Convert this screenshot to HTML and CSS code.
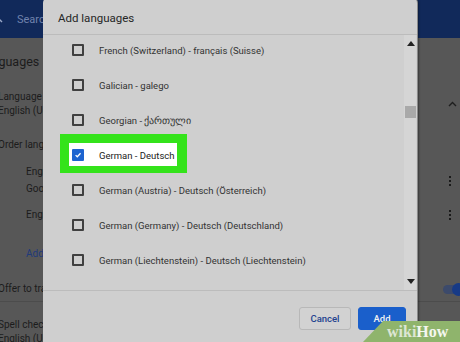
FILE: index.html
```html
<!DOCTYPE html>
<html>
<head>
<meta charset="utf-8">
<link rel="stylesheet" href="styles.css">
</head>
<body>
<div class="page">
  <div class="topbar">
    <svg class="search-ico" width="8" height="10" viewBox="0 0 8 10"><path d="M-2 4 L2 8" stroke="#9aa8c8" stroke-width="1.5" fill="none"/></svg>
    <span class="search">Search</span>
  </div>
  <div class="settings">
    <div class="s-title">Languages</div>
    <div class="s-row r-lang">
      <div class="s-left">
        <div class="s-line">Language</div>
        <div class="s-line">English (United States)</div>
      </div>
      <svg class="chev" width="9" height="6" viewBox="0 0 9 6"><path d="M1 5 L4.5 1.5 L8 5" stroke="#1e1e1e" stroke-width="1.4" fill="none"/></svg>
    </div>
    <div class="s-row r-order">
      <div class="s-left"><div class="s-line">Order languages based on your preference</div></div>
    </div>
    <div class="s-row r-eng1 indent">
      <div class="s-left">
        <div class="s-line">English (United States)</div>
        <div class="s-line g-line">Google Chrome</div>
      </div>
      <span class="dots"><i></i><i></i><i></i></span>
    </div>
    <div class="s-row r-eng2 indent">
      <div class="s-left"><div class="s-line">English</div></div>
      <span class="dots"><i></i><i></i><i></i></span>
    </div>
    <div class="s-row r-add indent">
      <div class="s-left"><div class="s-line link">Add languages</div></div>
    </div>
    <div class="s-row r-offer">
      <div class="s-left"><div class="s-line">Offer to translate pages</div></div>
      <span class="toggle"><span class="knob"></span></span>
    </div>
    <div class="s-sep"></div>
    <div class="s-row r-spell">
      <div class="s-left">
        <div class="s-line">Spell check</div>
        <div class="s-line">English (United States)</div>
      </div>
    </div>
  </div>

  <div class="dialog">
    <div class="d-head">Add languages</div>
    <div class="d-list">
      <div class="d-item"><span class="cb"></span><span class="lbl">French (Switzerland) - français (Suisse)</span></div>
      <div class="d-item"><span class="cb"></span><span class="lbl">Galician - galego</span></div>
      <div class="d-item"><span class="cb"></span><span class="lbl">Georgian - ქართული</span></div>
      <div class="d-item hl">
        <span class="hl-box"></span>
        <span class="cb checked"><svg width="10" height="10" viewBox="0 0 10 10"><path d="M2 5.2 L4.1 7.2 L8.2 2.8" stroke="#fff" stroke-width="1.6" fill="none"/></svg></span>
        <span class="lbl strong">German - Deutsch</span>
      </div>
      <div class="d-item"><span class="cb"></span><span class="lbl">German (Austria) - Deutsch (Österreich)</span></div>
      <div class="d-item"><span class="cb"></span><span class="lbl">German (Germany) - Deutsch (Deutschland)</span></div>
      <div class="d-item"><span class="cb"></span><span class="lbl">German (Liechtenstein) - Deutsch (Liechtenstein)</span></div>
      <div class="scrollbar">
        <svg class="arr up" width="8" height="5" viewBox="0 0 8 5"><path d="M0 5 L4 0 L8 5Z" fill="#222"/></svg>
        <span class="thumb"></span>
        <svg class="arr down" width="8" height="5" viewBox="0 0 8 5"><path d="M0 0 L4 5 L8 0Z" fill="#222"/></svg>
      </div>
    </div>
    <div class="d-foot">
      <button class="btn cancel">Cancel</button>
      <button class="btn add">Add</button>
    </div>
  </div>

  <div class="wikihow"><span class="wk">wiki</span><span class="hw">How</span></div>
</div>
</body>
</html>
```

FILE: styles.css
```css
* { box-sizing: border-box; }
html, body { margin: 0; padding: 0; }
body {
  width: 460px;
  height: 342px;
  overflow: hidden;
  background: #575757;
  font-family: Roboto, "Liberation Sans", sans-serif;
}
.page {
  position: relative;
  width: 460px;
  height: 342px;
  overflow: hidden;
}
.topbar {
  height: 38px;
  background: #11295a;
  display: flex;
  align-items: center;
  gap: 9px;
}
.search {
  color: #7083ad;
  font-size: 11px;
}
.settings {
  display: flex;
  flex-direction: column;
  color: #1c1c1c;
  font-size: 10px;
}
.s-title {
  font-size: 12.5px;
  line-height: 16px;
  margin-top: 16px;
  margin-left: -22px;
  width: 65px;
  overflow: hidden;
  white-space: nowrap;
}
.s-line {
  line-height: 14px;
  white-space: nowrap;
}
.s-row {
  display: flex;
  align-items: center;
  justify-content: space-between;
  padding-right: 3px;
}
.s-left {
  margin-left: -2px;
  width: 46px;
  overflow: hidden;
}
.indent .s-left { margin-left: 26px; width: 18px; }
.r-lang { margin-top: 20px; }
.r-order { margin-top: 20px; }
.r-eng1 { margin-top: 13px; }
.g-line { margin-top: 3px; }
.r-eng2 { margin-top: 12px; }
.r-add { margin-top: 25px; }
.link { color: #1f3a7a; }
.r-offer { margin-top: 21px; padding-right: 0; }
.s-sep { height: 1px; background: #4c4c4c; margin-top: 5px; }
.r-spell { margin-top: 16px; }
.dots {
  display: flex;
  flex-direction: column;
  gap: 2px;
  margin-right: 6px;
}
.dots i {
  display: block;
  width: 2px;
  height: 2px;
  background: #1a1a1a;
}
.toggle {
  position: relative;
  width: 22px;
  height: 9px;
  border-radius: 5px;
  background: #3c4a6b;
  margin-right: -5px;
}
.knob {
  position: absolute;
  right: 0;
  top: -2px;
  width: 13px;
  height: 13px;
  border-radius: 50%;
  background: #173a86;
}

/* dialog */
.dialog {
  position: absolute;
  left: 43px;
  top: -3px;
  width: 374px;
  height: 370px;
  background: #cfcfcf;
  border-radius: 6px;
  box-shadow: 1px 0 0 #8a8a8a, 2px 0 2px rgba(0,0,0,0.35);
  color: #2e2e2e;
}
.d-head {
  height: 38px;
  padding: 5px 0 0 15px;
  display: flex;
  align-items: center;
  font-size: 11.5px;
  color: #262626;
  border-bottom: 1px solid #bcbcbc;
}
.d-list {
  position: relative;
  height: 255px;
  overflow: hidden;
}
.d-item {
  position: relative;
  height: 35px;
  padding: 0 0 5px 29px;
  display: flex;
  align-items: center;
  gap: 15px;
}
.cb {
  position: relative;
  width: 12px;
  height: 12px;
  border: 2px solid #404040;
  border-radius: 1px;
  flex: none;
  display: flex;
  align-items: center;
  justify-content: center;
}
.cb.checked {
  background: #1d64d0;
  border-color: #1d64d0;
}
.lbl {
  position: relative;
  font-size: 9.5px;
  color: #333;
  white-space: nowrap;
}
.lbl.strong { color: #222; }
.hl-box {
  position: absolute;
  left: 17px;
  top: -6px;
  width: 127px;
  height: 39px;
  background: #fff;
  border-style: solid;
  border-color: #34e31b;
  border-width: 9px 10px 7px 9px;
}
.scrollbar {
  position: absolute;
  right: 1px;
  top: 0;
  width: 12px;
  height: 255px;
  background: #d5d5d5;
}
.arr { position: absolute; left: 3px; }
.arr.up { top: 6px; }
.arr.down { top: 244px; }
.thumb {
  position: absolute;
  left: 1px;
  top: 71px;
  width: 11px;
  height: 12px;
  background: #a9a9a9;
}
.d-foot {
  border-top: 1px solid #bcbcbc;
  display: flex;
  justify-content: flex-end;
  gap: 7px;
  padding: 16px 11px 0 0;
}
.btn {
  height: 23px;
  border-radius: 3px;
  font-family: Roboto, "Liberation Sans", sans-serif;
  font-size: 9.5px;
  font-weight: 500;
  padding: 0;
}
.cancel {
  width: 52px;
  background: #d2d2d2;
  border: 1px solid #b8b8b8;
  color: #23438f;
}
.add {
  width: 48px;
  background: #1a5fcb;
  border: 1px solid #1a5fcb;
  color: #f2f2f2;
}

/* watermark */
.wikihow {
  position: absolute;
  right: 0;
  bottom: 0;
  width: 97px;
  height: 21px;
  background: #8fb46c;
  clip-path: polygon(20px 0, 100% 0, 100% 100%, 0 100%);
  padding-left: 24px;
  display: flex;
  align-items: center;
  font-family: "Liberation Serif", serif;
  font-weight: bold;
  font-size: 16px;
}
.wk { color: #dde6d3; }
.hw { color: #f4f7ef; }
```
